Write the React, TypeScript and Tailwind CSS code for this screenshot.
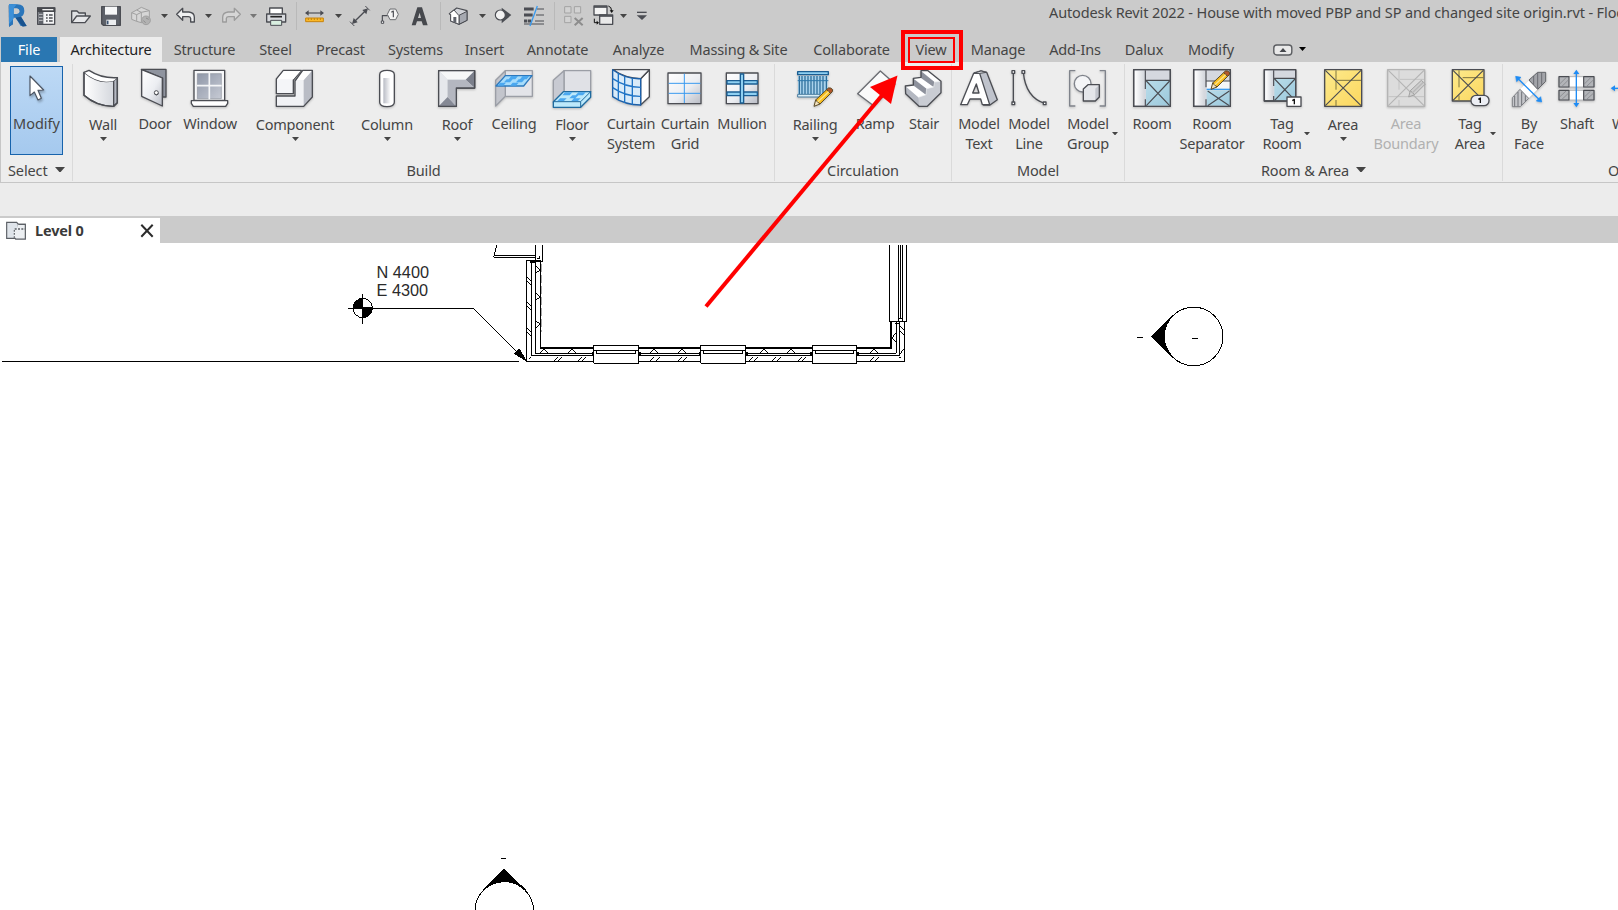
import type { ReactNode } from "react";

const INK = "#4b4d53";

/* ---------- shared gradients ---------- */
function Defs() {
  return (
    <svg className="absolute h-0 w-0" aria-hidden="true">
      <defs>
        <linearGradient id="steel" x1="0" y1="0" x2="1" y2="1">
          <stop offset="0" stopColor="#ffffff" />
          <stop offset="0.55" stopColor="#eceef2" />
          <stop offset="1" stopColor="#b9bcc5" />
        </linearGradient>
        <linearGradient id="steelH" x1="0" y1="0" x2="1" y2="0">
          <stop offset="0" stopColor="#b9bcc5" />
          <stop offset="1" stopColor="#ffffff" />
        </linearGradient>
        <linearGradient id="wallG" x1="0" y1="0" x2="1" y2="0">
          <stop offset="0" stopColor="#ffffff" />
          <stop offset="1" stopColor="#d4d7dd" />
        </linearGradient>
        <linearGradient id="glass" x1="0" y1="0" x2="1" y2="1">
          <stop offset="0" stopColor="#8f97a8" />
          <stop offset="1" stopColor="#c6cad4" />
        </linearGradient>
        <linearGradient id="aqua" x1="0" y1="0" x2="1" y2="1">
          <stop offset="0" stopColor="#b9dcea" />
          <stop offset="1" stopColor="#9cc9dc" />
        </linearGradient>
        <linearGradient id="gold" x1="0" y1="0" x2="1" y2="1">
          <stop offset="0" stopColor="#fdea8c" />
          <stop offset="1" stopColor="#fbd75f" />
        </linearGradient>
      </defs>
    </svg>
  );
}

/* Ribbon icons: 40px box, three drawing units to a pixel */
function Big({ x, children }: { x: number; children: ReactNode }) {
  return (
    <svg className="h-10 w-10 shrink-0 overflow-visible drop-shadow-[0_1px_1px_rgba(0,0,0,0.22)]" viewBox={`${x} 204 120 120`} fill="none" stroke={INK} strokeWidth={4} strokeLinejoin="round">
      {children}
    </svg>
  );
}

/* Quick access icons: 20px box, three drawing units to a pixel */
function Small({ x, className = "", children }: { x: number; className?: string; children: ReactNode }) {
  return (
    <svg className={`h-5 w-5 shrink-0 overflow-visible ${className}`} viewBox={`${x} 18 60 60`} fill="none" stroke={INK} strokeWidth={4} strokeLinejoin="round">
      {children}
    </svg>
  );
}

function Caret({ className = "", size = "w-[7px]" }: { className?: string; size?: string }) {
  return (
    <svg className={`${size} shrink-0 ${className}`} viewBox="0 0 8 4.6" fill="currentColor">
      <path d="M0 0h8L4 4.6z" />
    </svg>
  );
}

function Pencil({ x, y, gray = false }: { x: number; y: number; gray?: boolean }) {
  return (
    <g transform={`translate(${x} ${y})`} strokeWidth={3} stroke={gray ? "#a2a2a2" : "#5a4a26"}>
      <path d="M-2 1 L3 -18 L16 -6 Z" fill={gray ? "#cfcfcf" : "#f3e3c0"} />
      <path d="M3 -18 L36 -49 L48 -38 L16 -6 Z" fill={gray ? "#cdcdcd" : "#f7bd1f"} />
      {!gray && <path d="M36 -49 L41 -54 Q49 -56 54 -49 L53 -43 L48 -38 Z" fill="#b4572b" />}
      <path d="M9 -12 L42 -43" stroke={gray ? "#b8b8b8" : "#fde48b"} strokeWidth={4} />
    </g>
  );
}

/* ---------- ribbon icons ---------- */
const icons: Record<string, ReactNode> = {
  cursor: (
    <svg className="h-10 w-10 shrink-0 overflow-visible drop-shadow-[1px_2px_1px_rgba(0,0,0,0.25)]" viewBox="51 204 120 120" fill="none">
      <path d="M90 228 V287 L103 276 L114 300 L124 295 L114 271 L131 270 Z" fill="#fff" stroke="#4b5462" strokeWidth={3.5} strokeLinejoin="round" />
    </svg>
  ),
  wall: (
    <Big x={254}>
      <path d="M257 217 Q300 254 346 242 V319 Q296 320 257 286 Z" fill="url(#wallG)" />
      <path d="M346 242 L357 233 V308 L346 319 Z" fill="#b4b8c2" />
      <path d="M257 217 L272 211 Q310 236 357 233 L346 242 Q300 254 257 217 Z" fill="#fff" stroke="none" />
      <path d="M346 319 Q296 320 257 286 V217 L272 211 Q310 236 357 233 V308 Z" />
    </Big>
  ),
  door: (
    <Big x={405}>
      <path d="M424 208 H498 V291 H488 V234 Z" fill="#8f949f" />
      <path d="M425 209 L487 234 V318 L425 289 Z" fill="url(#steel)" />
      <circle cx="469" cy="278" r="6" fill="#fff" strokeWidth={3} />
      <path d="M464 283 Q470 288 476 281" strokeWidth={3} />
    </Big>
  ),
  window: (
    <Big x={573}>
      <path d="M585 211 H677 V301 H585 Z" fill="#f7f8fa" />
      <path d="M595 221 H667 V296 H595 Z" fill="url(#glass)" strokeWidth={2} stroke="#8c919c" />
      <path d="M631 219 V298 M594 257 H668" stroke="#f4f5f7" strokeWidth={5} />
      <path d="M577 302 H686 V310 L680 319 H583 L577 310 Z" fill="#fff" />
    </Big>
  ),
  component: (
    <Big x={825}>
      <path d="M829 288 H885 V243 L908 211 H937 V291 L911 319 H829 Z" fill="#f1f2f5" stroke="none" />
      <path d="M911 240 L937 211 V291 L911 319 Z" fill="#b9bcc5" stroke="none" />
      <path d="M885 240 L908 211 H937 L911 240 Z" fill="#fff" stroke="none" />
      <path d="M829 237 L850 211 H904 L880 240 V281 H829 Z" fill="#f4f5f8" />
      <path d="M832 238 L852 213 H902 L880 238 Z" fill="#fff" stroke="none" />
      <path d="M829 288 H885 V243 L908 211 H937 V291 L911 319 H829 Z" />
    </Big>
  ),
  column: (
    <Big x={141}>
      <path d="M179 224 Q179 211 201 211 Q223 211 223 224 V307 Q223 320 201 320 Q179 320 179 307 Z" fill="#fff" />
      <path d="M190 234 H212 V310 H190 Z" fill="url(#steelH)" stroke="none" />
    </Big>
  ),
  roof: (
    <Big x={351}>
      <path d="M356 212 H464 V264 H409 V319 H356 Z" fill="#d4d7dd" />
      <path d="M358 214 H462 L437 239 H383 Z" fill="#f6f7f8" stroke="none" />
      <path d="M356 212 L383 239 V291 L356 319 Z" fill="#e6e8ec" stroke="none" />
      <path d="M437 239 L464 212 V264 Z" fill="#7b7f8b" stroke="none" />
      <path d="M356 319 L383 291 L409 319 Z" fill="#858995" stroke="none" />
      <path d="M383 239 H437 L464 264 H409 V319 L383 291 Z" fill="#b4b7c0" stroke="none" />
      <path d="M356 212 H464 V264 H409 V319 H356 Z" />
    </Big>
  ),
  ceiling: (
    <Big x={522}>
      <path d="M556 212 H637 V289 H556 Z" fill="#e3e4e9" stroke="#9b9ea6" />
      <path d="M527 241 L556 212 V289 L527 318 Z" fill="#c3c5cc" stroke="#9b9ea6" />
      <path d="M556 227 H636 L611 258 H528 Z" fill="#a7dcfb" stroke="#2d79bd" />
      <path d="M574 228 h20 l-8 10 h-20z M608 228 h20 l-8 10 h-20z M560 238 h18 l-8 9 h-18z M596 238 h18 l-8 9 h-18z M540 248 h18 l-8 9 h-18z M578 248 h18 l-8 9 h-18z" fill="#4ba8f0" stroke="none" />
    </Big>
  ),
  floor: (
    <Big x={696}>
      <path d="M732 212 H812 V275 H732 Z" fill="#e0e1e6" stroke="#9b9ea6" />
      <path d="M700 241 L732 212 V275 L700 308 Z" fill="#c8cad2" stroke="#9b9ea6" />
      <path d="M730 275 H812 V292 L782 322 H700 V305 Z" fill="#bde9fb" stroke="#1f6a9e" />
      <path d="M735 277 h22 l-8 9 h-22z M775 277 h22 l-8 9 h-22z M757 286 h18 l-9 9 h-18z M720 295 h20 l-8 8 h-20z M762 295 h20 l-8 8 h-20z" fill="#4ba8f0" stroke="none" />
      <path d="M700 305 H782 L812 275 M782 305 V322" stroke="#1f6a9e" strokeWidth={3} />
    </Big>
  ),
  curtainSystem: (
    <Big x={876}>
      <path d="M965 236 L991 209 V290 L965 315 Z" fill="#fff" />
      <path d="M881 209 H991 L965 236 Q920 236 881 209 Z" fill="#f2f3f5" />
      <path d="M881 209 Q920 238 965 236 V315 Q918 315 881 290 Z" fill="#d9ebf9" stroke="#1c5fa8" />
      <path d="M898 220 V301 M917 230 V309 M940 235 V314 M881 236 Q920 262 965 262 M881 263 Q920 290 965 289" stroke="#1f74c6" />
    </Big>
  ),
  curtainGrid: (
    <Big x={78}>
      <path d="M87 219 H186 V311 H87 Z" fill="url(#steel)" />
      <path d="M136 221 V309 M89 250 H184 M89 280 H184" stroke="#3a9bf0" strokeWidth={3} />
    </Big>
  ),
  mullion: (
    <Big x={246}>
      <path d="M259 219 H354 V311 H259 Z" fill="url(#steel)" />
      <path d="M261 242 H352 V252 H261 Z M261 276 H352 V287 H261 Z" fill="#8fd0f2" stroke="#1b5e93" />
      <path d="M301 222 H311 V309 H301 Z" fill="#8fd0f2" stroke="#1b5e93" />
    </Big>
  ),
  railing: (
    <Big x={465}>
      <path d="M474 228 H563 V284 H474 Z" fill="#a9d2ec" stroke="none" />
      <path d="M478 228 V282 M486 228 V282 M495 228 V282 M504 228 V282 M513 228 V282 M522 228 V282 M531 228 V282 M540 228 V282 M549 228 V282 M559 228 V282" stroke="#1f618f" strokeWidth={3.4} />
      <path d="M473 215 H565 V224 H473 Z" fill="#8fd0f2" stroke="#1b5e93" />
      <path d="M473 242 H565" stroke="#2f78ab" strokeWidth={3} />
      <path d="M473 283 H540 V291 H473 Z" fill="#d9eef8" stroke="#4b7d9f" strokeWidth={3} />
      <Pencil x={524} y={318} />
    </Big>
  ),
  ramp: (
    <Big x={648}>
      <path d="M656 281 L724 213 L768 252 L705 318 Z" fill="#fafafa" stroke="#6a6c72" />
    </Big>
  ),
  stair: (
    <Big x={792}>
      <path d="M796 258 L820 254 V234 L843 231 V212 L862 211 L903 244 V278 L862 319 H837 L797 281 Z" fill="#c9ccd3" stroke="none" />
      <path d="M797 259 L835 292 L837 319 L797 281 Z" fill="#b4b8c1" stroke="none" />
      <path d="M796 258 L818 255 L858 284 L835 292 Z" fill="#fff" stroke="none" />
      <path d="M820 236 L860 266 L858 284 L820 256 Z" fill="#8d919c" stroke="none" />
      <path d="M820 235 L843 232 L881 261 L860 266 Z" fill="#fff" stroke="none" />
      <path d="M843 214 L884 246 L881 261 L843 234 Z" fill="#8d919c" stroke="none" />
      <path d="M843 212 L862 211 L903 244 L884 246 Z" fill="#fff" stroke="none" />
      <path d="M835 292 L858 284 L860 266 L881 261 L884 246 L903 244" strokeWidth={2} stroke="#f2f3f5" />
      <path d="M796 258 L820 255 V235 L843 232 V212 L862 211 L903 244 V278 L862 319 H837 L797 281 Z" />
    </Big>
  ),
  modelText: (
    <Big x={0}>
      <path d="M46 219 L66 213 L83 217 L115 299 L93 315 H74 L57 226 Z" fill="#bfc3cc" />
      <path fillRule="evenodd" d="M5 314 L44 220 H62 L92 314 H70 L65 297 H33 L25 314 Z M41 279 H60 L52 252 Z" fill="#fff" />
      <path d="M44 220 L66 213 L83 217 L62 220 Z" fill="#eceef1" strokeWidth={3} />
    </Big>
  ),
  modelLine: (
    <Big x={150}>
      <path d="M163 217 V310 M193 217 Q200 292 257 310" />
      <path d="M159 212 h8 v8 h-8z M159 306 h8 v8 h-8z M189 212 h8 v8 h-8z M253 306 h8 v8 h-8z" fill="#fff" />
    </Big>
  ),
  modelGroup: (
    <Big x={324}>
      <path d="M346 212 H329 V318 H346 M419 212 H436 V318 H419" stroke="#7f838b" />
      <circle cx="368" cy="251" r="25" fill="#f4f5f7" stroke="#7f838b" />
      <path d="M370 265 L382 254 H418 V291 L406 303 H370 Z" fill="#e4e6ea" stroke="none" />
      <path d="M406 266 L418 254 V291 L406 303 Z" fill="#c3c6ce" stroke="none" />
      <path d="M370 267 L384 254 H418 V291 L406 303 H370 Z" />
    </Big>
  ),
  room: (
    <Big x={516}>
      <path d="M521 209 H631 V319 H521 Z" fill="#d5d8df" />
      <path d="M524 212 H553 V316 H524 Z" fill="url(#wallG)" stroke="none" />
      <path d="M558 242 H630 V317 H558 Z" fill="url(#aqua)" stroke="none" />
      <path d="M556 211 V267 M556 298 V318 M556 241 H630 M559 243 L629 317 M629 243 L559 317" strokeWidth={3.5} />
      <path d="M521 209 H631 V319 H521 Z" />
    </Big>
  ),
  roomSeparator: (
    <Big x={696}>
      <path d="M701 209 H811 V319 H701 Z" fill="#d5d8df" />
      <path d="M704 212 H733 V316 H704 Z" fill="url(#wallG)" stroke="none" />
      <path d="M740 271 H810 V317 H740 Z" fill="url(#aqua)" stroke="none" />
      <path d="M740 244 H810 V267 H740 Z" fill="#f4f6f8" stroke="none" />
      <path d="M738 211 V262 M738 298 V318 M738 243 H810 M743 273 L808 317 M808 273 L743 317" strokeWidth={3.5} />
      <path d="M740 268 H810" stroke="#3a9bf0" />
      <path d="M701 209 H811 V319 H701 Z" />
      <Pencil x={755} y={267} />
    </Big>
  ),
  tagRoom: (
    <Big x={904}>
      <path d="M911 209 H1005 V303 H911 Z" fill="#d5d8df" />
      <path d="M914 212 H936 V300 H914 Z" fill="url(#wallG)" stroke="none" />
      <path d="M941 237 H1004 V301 H941 Z" fill="url(#aqua)" stroke="none" />
      <path d="M939 211 V258 M939 288 V302 M939 235 H1004 M942 237 L1003 301 M1003 237 L942 301" strokeWidth={3.5} />
      <path d="M911 209 H1005 V303 H911 Z" />
      <path d="M979 291 H1021 V319 H979 Z" fill="#fff" />
      <path d="M995 302 L1001 298 V313" stroke="#111" />
    </Big>
  ),
  area: (
    <Big x={138}>
      <path d="M143 209 H254 V319 H143 Z" fill="url(#gold)" />
      <path d="M177 211 V269 M177 300 V318 M180 241 H252" stroke="#7d7440" strokeWidth={3} />
      <path d="M145 211 L252 317 M252 211 L145 317" strokeWidth={3.5} />
    </Big>
  ),
  areaBoundary: (
    <Big x={327}>
      <g stroke="#b4b4b4">
        <path d="M332 209 H443 V319 H332 Z" fill="#dcdcdc" />
        <path d="M366 211 V269 M366 300 V318 M369 238 H441 M334 290 H441" stroke="#c2c2c2" strokeWidth={3} />
        <path d="M334 211 L441 317 M441 211 L334 317" strokeWidth={3.5} />
      </g>
      <Pencil x={397} y={290} gray />
    </Big>
  ),
  tagArea: (
    <Big x={514}>
      <path d="M521 209 H616 V303 H521 Z" fill="url(#gold)" />
      <path d="M541 211 V262 M541 286 V302 M552 233 H615" stroke="#7d7440" strokeWidth={3} />
      <path d="M523 211 L614 301 M614 211 L523 301" strokeWidth={3.5} />
      <rect x="577" y="286" width="54" height="31" rx="15" fill="#eceef4" />
      <path d="M599 298 L605 294 V309" stroke="#111" />
    </Big>
  ),
  byFace: (
    <Big x={694}>
      <path d="M727 268 L753 242 L780 268 L753 295 Z" fill="#fff" stroke="none" />
      <path d="M754 240 L780 217 H804 V244 L780 268 Z" fill="#a2a4a9" stroke="#63656a" strokeWidth={3} />
      <path d="M704 293 L727 268 L753 295 L728 320 H704 Z" fill="#c5c6ca" stroke="#808287" strokeWidth={3} />
      <path d="M768 228 V254 M780 218 V266 M792 218 V254 M711 288 V319 M721 276 V319 M732 275 V315 M743 286 V304" stroke="#5f6167" strokeWidth={2.5} />
      <path d="M720 235 L786 300" stroke="#1e8cf5" />
      <path d="M714 229 L730 232 L717 245 Z M792 306 L776 303 L789 290 Z" fill="#1e8cf5" stroke="#1e8cf5" strokeWidth={2} />
    </Big>
  ),
  shaft: (
    <Big x={837}>
      <path d="M843 230 H948 V261 H843 Z M843 271 H948 V300 H843 Z" fill="#fff" stroke="#b7b8bb" strokeWidth={3} />
      <path d="M843 230 H873 V261 H843 Z M917 230 H948 V261 H917 Z M843 271 H873 V300 H843 Z M917 271 H948 V300 H917 Z" fill="#b2b4b8" strokeWidth={3.5} />
      <path d="M845 252 L865 232 M852 259 L871 240 M919 252 L939 232 M926 259 L946 240 M845 291 L864 273 M852 298 L871 280 M919 291 L938 273 M926 298 L946 280" stroke="#85878c" strokeWidth={2.5} />
      <path d="M895 218 V313" stroke="#1e8cf5" />
      <path d="M895 209 L904 222 H886 Z M895 322 L904 309 H886 Z" fill="#1e8cf5" stroke="none" />
    </Big>
  ),
  wallOpening: (
    <Big x={984}>
      <path d="M1004 265 H1080" stroke="#1e8cf5" />
      <path d="M998 265 L1011 256 V274 Z" fill="#1e8cf5" stroke="none" />
    </Big>
  ),
};

/* ---------- ribbon ---------- */
type Btn = { icon: string; lines: string[]; box: string; drop?: "below" | "side"; off?: boolean };

function RibbonButton({ icon, lines, box, drop, off }: Btn) {
  return (
    <button className={`relative flex shrink-0 flex-col items-center pt-1.5 ${box} ${off ? "text-[#b1b1b1]" : "text-[#454545]"}`}>
      {icons[icon]}
      <span className={`flex flex-col items-center text-[14.5px] leading-5 tracking-[-0.22px] whitespace-nowrap ${drop === "below" ? "mt-1.5" : "mt-[5px]"}`}>
        {lines.map((l) => (
          <span key={l}>{l}</span>
        ))}
      </span>
      {drop === "below" && <Caret size="w-[7px]" className="mt-[3px]" />}
      {drop === "side" && <Caret size="w-[6px]" className="absolute top-[70px] -right-[5px]" />}
    </button>
  );
}

function Panel({ title, width, buttons, menu }: { title: string; width: string; buttons: Btn[]; menu?: boolean }) {
  return (
    <section className={`flex h-[120px] shrink-0 flex-col ${width}`}>
      <div className="flex h-24 items-start">
        {buttons.map((b) => (
          <RibbonButton key={b.icon} {...b} />
        ))}
      </div>
      <div className="flex h-[23px] items-center justify-center gap-[7px] text-[14.5px] leading-[22px] tracking-[-0.12px] text-[#454545]">
        {title}
        {menu && <Caret size="w-[10px]" />}
      </div>
    </section>
  );
}

const Divider = () => <div className="mt-0.5 h-[117px] w-px shrink-0 bg-[#dadada]" />;

const build: Btn[] = [
  { icon: "wall", lines: ["Wall"], box: "ml-[7px] w-[46px]", drop: "below" },
  { icon: "door", lines: ["Door"], box: "ml-1 w-[50px]" },
  { icon: "window", lines: ["Window"], box: "w-[60px]" },
  { icon: "component", lines: ["Component"], box: "ml-3 w-[86px]", drop: "below" },
  { icon: "column", lines: ["Column"], box: "ml-[19px] w-[60px]", drop: "below" },
  { icon: "roof", lines: ["Roof"], box: "ml-5 w-10", drop: "below" },
  { icon: "ceiling", lines: ["Ceiling"], box: "ml-3 w-[50px]" },
  { icon: "floor", lines: ["Floor"], box: "ml-3 w-[42px]", drop: "below" },
  { icon: "curtainSystem", lines: ["Curtain", "System"], box: "ml-[13px] w-[50px]" },
  { icon: "curtainGrid", lines: ["Curtain", "Grid"], box: "ml-1 w-[50px]" },
  { icon: "mullion", lines: ["Mullion"], box: "ml-[5px] w-[54px]" },
];
const circulation: Btn[] = [
  { icon: "railing", lines: ["Railing"], box: "ml-[15px] w-[50px]", drop: "below" },
  { icon: "ramp", lines: ["Ramp"], box: "ml-[13px] w-11" },
  { icon: "stair", lines: ["Stair"], box: "ml-[7px] w-10" },
];
const model: Btn[] = [
  { icon: "modelText", lines: ["Model", "Text"], box: "ml-[3px] w-12" },
  { icon: "modelLine", lines: ["Model", "Line"], box: "ml-[3px] w-[46px]" },
  { icon: "modelGroup", lines: ["Model", "Group"], box: "ml-[11px] w-[50px]", drop: "side" },
];
const roomArea: Btn[] = [
  { icon: "room", lines: ["Room"], box: "ml-[5px] w-11" },
  { icon: "roomSeparator", lines: ["Room", "Separator"], box: "ml-[3px] w-[70px]" },
  { icon: "tagRoom", lines: ["Tag", "Room"], box: "ml-3 w-[46px]", drop: "side" },
  { icon: "area", lines: ["Area"], box: "ml-[18px] w-10", drop: "below" },
  { icon: "areaBoundary", lines: ["Area", "Boundary"], box: "ml-[9px] w-[68px]", off: true },
  { icon: "tagArea", lines: ["Tag", "Area"], box: "ml-[9px] w-[42px]", drop: "side" },
];
const opening: Btn[] = [
  { icon: "byFace", lines: ["By", "Face"], box: "ml-1.5 w-10" },
  { icon: "shaft", lines: ["Shaft"], box: "ml-2 w-10" },
  { icon: "wallOpening", lines: ["Wall"], box: "ml-3 w-[34px]" },
];

function Ribbon() {
  return (
    <div className="flex h-[121px] overflow-hidden border-b border-l border-[#c6c6c6] bg-[#ededed]">
      <section className="flex h-[120px] w-[71px] shrink-0 flex-col">
        <button className="mt-1 ml-[9px] flex h-[89px] w-[53px] flex-col items-center border border-[#1763ac] bg-gradient-to-b from-[#bdd9f5] to-[#a5c9ee] pt-px text-[#454545]">
          {icons.cursor}
          <span className="mt-[5px] text-[14.5px] leading-5">Modify</span>
        </button>
        <div className="mt-[3px] flex h-[23px] items-center gap-[7px] pl-[7px] text-[14.5px] leading-[22px] tracking-[-0.12px] text-[#454545]">
          Select
          <Caret size="w-[10px]" />
        </div>
      </section>
      <Divider />
      <Panel title="Build" width="w-[701px]" buttons={build} />
      <Divider />
      <Panel title="Circulation" width="w-[176px]" buttons={circulation} />
      <Divider />
      <Panel title="Model" width="w-[172px]" buttons={model} />
      <Divider />
      <Panel title="Room & Area" width="w-[377px]" buttons={roomArea} menu />
      <Divider />
      <Panel title="Opening" width="w-[268px]" buttons={opening} />
    </div>
  );
}

/* ---------- title bar with quick access tools ---------- */
const Rule = ({ className }: { className: string }) => <div className={`h-7 w-px shrink-0 bg-[#b9b9b9] ${className}`} />;

function TitleBar() {
  return (
    <header className="flex h-[37px] items-start overflow-hidden bg-[#cbcbcb] text-[#454545]">
      <div className="flex h-8 shrink-0 items-center">
        <Small x={21} className="ml-[7px]">
          <path d="M26 16 L38 13 V73 L27 80 Z" fill="#174d86" stroke="none" />
          <path fillRule="evenodd" d="M27 13 H52 Q74 14 73 33 Q72 47 63 50 L80 78 H62 L47 53 H39 V73 L27 80 Z M41 25 V42 H51 Q59 41 59 34 Q58 26 51 25 Z" fill="#2b76bb" stroke="none" />
          <path d="M46 53 L63 50 L80 78 L68 80 Z" fill="#19538f" stroke="none" />
          <path d="M27 13 H50 L41 25 V56 L27 72 Z" fill="#3d90d8" stroke="none" />
        </Small>
        <Small x={108} className="ml-[9px]">
          <path d="M113 24 H164 V73 H113 Z" fill="#f4f5f6" />
          <path d="M111 22 H166 V36 H111 Z" fill="#46484d" stroke="none" />
          <path d="M127 29 H160" stroke="#f0f0f0" strokeWidth={4} />
          <path d="M115 36 H130 V72 H115 Z" fill="#5f636a" stroke="none" />
          <path d="M117 43 H128 M117 52 H128 M117 61 H128" strokeWidth={3} stroke="#c4c6ca" />
          <path d="M138 45 H143 M147 45 H158 M138 54 H143 M147 54 H158 M138 63 H143 M147 63 H158" strokeWidth={4} />
        </Small>
        <Small x={213} className="ml-[15px]">
          <path d="M215 68 V33 H231 L237 39 H256 V48" fill="#dfe1e4" />
          <path d="M215 68 L230 48 H271 L255 68 Z" fill="#e6e7e9" />
        </Small>
        <Small x={303} className="ml-2.5">
          <path d="M305 20 H361 V76 H310 L305 71 Z" fill="#5d6169" />
          <path d="M315 20 H351 V44 H315 Z" fill="#f6f7f8" stroke="none" />
          <path d="M319 59 H348 V75 H319 Z" fill="#eceef0" stroke="none" />
          <path d="M323 62 V73" stroke="#3a5270" strokeWidth={5} />
        </Small>
        <Small x={393} className="ml-2.5">
          <g stroke="#a0a0a0" strokeWidth={3}>
            <path d="M395 38 L410 30 L424 22 L448 32 V58 L424 68 L410 64 L395 58 Z" fill="#d6d6d6" />
            <path d="M395 38 L410 44 V64 M410 30 L424 37 L448 32 M424 37 V68 M410 44 L424 37" />
            <circle cx="438" cy="61" r="13" fill="#b2b2b2" />
            <path d="M430 62 L437 68 M446 58 L438 54" stroke="#8f8f8f" />
          </g>
        </Small>
        <Caret size="w-[7px]" className="ml-[10px]" />
        <Small x={528} className="ml-[8px]">
          <path d="M530 43 L548 25 V36 H567 Q583 38 583 52 V66 H572 V55 Q571 50 565 50 H548 V61 Z" fill="#eff0f1" />
        </Small>
        <Caret size="w-[7px]" className="ml-[9px]" />
        <Small x={666} className="ml-[10px]">
          <path d="M721 43 L703 25 V36 H684 Q668 38 668 52 V66 H679 V55 Q680 50 686 50 H703 V61 Z" fill="#d6d6d6" stroke="#9c9c9c" />
        </Small>
        <Caret size="w-[7px]" className="ml-[8px] text-[#777]" />
        <Small x={798} className="ml-[9px]">
          <path d="M809 24 H847 V44 H809 Z" fill="#fff" />
          <path d="M800 42 H857 V66 H800 Z" fill="#d8dade" />
          <path d="M811 50 H846" stroke="#222" strokeWidth={5} />
          <path d="M812 61 H845 V76 H812 Z" fill="#d9efe0" strokeWidth={3} />
        </Small>
        <Rule className="ml-2.5" />
        <Small x={912} className="ml-[7px]">
          <path d="M920 39 H967" strokeWidth={3.5} />
          <path d="M915 39 L926 31 V47 Z M972 39 L961 31 V47 Z" fill={INK} stroke="none" />
          <path d="M917 54 H970 V65 H917 Z" fill="#fbb827" stroke="#c8830b" strokeWidth={3} />
          <path d="M925 55 V60 M934 55 V60 M943 55 V60 M952 55 V60 M961 55 V60" stroke="#9d6508" strokeWidth={2} />
        </Small>
        <Caret size="w-[7px]" className="ml-[11px]" />
        <Small x={90} className="ml-[8px]">
          <path d="M102 66 L138 31" strokeWidth={4} />
          <path d="M96 72 L101 54 L113 67 Z M144 25 L139 43 L127 30 Z" fill={INK} stroke="none" />
          <path d="M90 65 L103 78 M136 18 L149 31" strokeWidth={3} />
        </Small>
        <Small x={180} className="ml-2.5">
          <path d="M187 66 V47 H203" strokeWidth={3.5} />
          <path d="M184 63 h7 v7 h-7z" fill="#fff" strokeWidth={3} />
          <path d="M202 43 L210 27 H227 L235 43 L227 59 H210 Z" fill="#f3f3f3" stroke="#6a6c70" strokeWidth={3} />
          <path d="M214 37 L220 33 V52" strokeWidth={3.5} />
        </Small>
        <Small x={270} className="ml-2.5">
          <path fillRule="evenodd" d="M275 76 L292 22 H306 L323 76 H309 L305 64 H291 L287 76 Z M294 54 H303 L299 38 Z" fill="#46484d" stroke="none" />
        </Small>
        <Rule className="ml-2.5" />
        <Small x={384} className="ml-[7px]">
          <path d="M388 41 L410 24 L441 32 V61 L417 73 L392 63 V44 Z" fill="#d3d5da" strokeWidth={3.5} />
          <path d="M417 46 L441 34 V61 L417 73 Z" fill="#a6a9b1" strokeWidth={3} />
          <path d="M388 41 L402 30 L417 47 V73 L392 63 V43 Z" fill="#fff" strokeWidth={3} />
          <path d="M400 51 H409 V69 L400 66 Z" fill="#60636b" stroke="none" />
        </Small>
        <Caret size="w-[7px]" className="ml-[11px]" />
        <Small x={519} className="ml-[7px]">
          <path d="M545 23 L574 45 L545 70 Z" fill={INK} stroke="none" />
          <circle cx="541" cy="45" r="15" fill="#f1f1f1" strokeWidth={3.5} />
        </Small>
        <Small x={612} className="ml-[11px]">
          <path d="M612 27 H641 M612 45 H638" strokeWidth={9} />
          <path d="M612 63 H634" strokeWidth={9} strokeDasharray="10 2" />
          <path d="M651 27 H672 M648 45 H672 M645 63 H672" strokeWidth={3} />
          <path d="M612 72 H672" strokeWidth={3} />
          <path d="M630 78 L652 18" stroke="#3a9bf0" />
        </Small>
        <Rule className="ml-2.5" />
        <Small x={729} className="ml-2">
          <g stroke="#a3a3a3" strokeWidth={3}>
            <path d="M734 20 H753 V39 H734 Z M763 20 H782 V39 H763 Z M734 49 H753 V68 H734 Z" fill="#d2d2d2" />
            <path d="M764 54 L788 76 M788 54 L764 76" stroke="#8d8d8d" strokeWidth={6} />
          </g>
        </Small>
        <Small x={819} className="ml-2.5">
          <path d="M822 18 H861 V45 H822 Z" fill="#f4f4f4" />
          <path d="M822 21 H861" strokeWidth={5} />
          <path d="M839 45 H878 V73 H839 Z" fill="#e9e9e9" />
          <path d="M839 48 H878" strokeWidth={5} />
          <path d="M865 18 Q875 20 875 34 M823 56 V68 H832" stroke="#111" strokeWidth={3} />
          <path d="M869 31 H881 L875 39 Z M830 62 V74 L837 68 Z" fill="#111" stroke="none" />
        </Small>
        <Caret size="w-[7px]" className="ml-[7px]" />
        <Small x={936} className="ml-[5px]">
          <path d="M951 37 H980" strokeWidth={4} />
          <path d="M950 46 H981 L966 60 Z" fill={INK} stroke="none" />
        </Small>
      </div>
      <div className="ml-[397px] h-[25px] text-[14.5px] leading-[25px] tracking-[-0.12px] whitespace-nowrap">
        Autodesk Revit 2022 - House with moved PBP and SP and changed site origin.rvt - Floor Plan: Level 0
      </div>
    </header>
  );
}

/* ---------- ribbon tabs ---------- */
const tabs: [string, string][] = [
  ["Structure", "w-[85px]"],
  ["Steel", "w-[57px]"],
  ["Precast", "w-[73px]"],
  ["Systems", "w-[77px]"],
  ["Insert", "w-[61px]"],
  ["Annotate", "w-[85px]"],
  ["Analyze", "w-[77px]"],
  ["Massing & Site", "w-[123px]"],
  ["Collaborate", "w-[103px]"],
  ["View", "w-[56px]"],
  ["Manage", "w-[78px]"],
  ["Add-Ins", "w-[76px]"],
  ["Dalux", "w-[62px]"],
  ["Modify", "w-[72px]"],
];

function Tabs() {
  return (
    <nav className="flex h-[25px] bg-[#cbcbcb] text-[14.5px] leading-[25px] tracking-[-0.16px] whitespace-nowrap text-[#454545]">
      <span className="ml-px flex w-14 shrink-0 justify-center bg-[#2a77b2] text-white">File</span>
      <span className="ml-[3px] flex w-[102px] shrink-0 justify-center bg-[#ededed] text-[#222]">Architecture</span>
      {tabs.map(([name, w]) => (
        <span key={name} className={`relative flex shrink-0 justify-center ${w}`}>
          {name}
          {name === "View" && (
            <>
              <span className="absolute -top-[7px] -left-[2px] h-10 w-[62px] border-4 border-[#f00]" />
              <span className="absolute top-0 left-[5px] h-[26px] w-[47px] border-2 border-[#f00]" />
            </>
          )}
        </span>
      ))}
      <span className="ml-[26px] flex items-center gap-[6px]">
        <svg className="h-3 w-5" viewBox="0 0 20 12">
          <rect x="0.8" y="1" width="18" height="10" rx="3" fill="#e9e9e9" stroke="#5b5d61" strokeWidth="1.4" />
          <path d="M6.5 8 L10 4 L13.5 8 Z" fill="#46484d" />
        </svg>
        <Caret size="w-[7px]" className="text-black" />
      </span>
    </nav>
  );
}

/* ---------- document tabs ---------- */
function DocumentTabs() {
  return (
    <div className="flex h-[27px] items-end bg-[#cbcbcb]">
      <div className="flex h-[25px] w-40 items-center bg-white pl-1.5">
        <svg className="h-5 w-5 shrink-0" viewBox="18 151 60 60" fill="none" stroke="#5c6066" strokeWidth={3.5}>
          <path d="M20 155 H50 L55 161 V203 H20 Z" fill="#dfe4ea" />
          <path d="M55 161 H76 V205 H47 L42 200" fill="#eef0f3" />
          <path d="M42 176 H55 V161 H76 V205 H47 L42 200 Z" fill="#eceff2" stroke="none" />
          <path d="M55 161 H76 V205 H47 L42 200" />
          <path d="M44 175 H76" strokeDasharray="6 4" strokeWidth={5} />
          <path d="M43 178 V198" strokeDasharray="5 4" />
        </svg>
        <span className="ml-[9px] text-[14.5px] leading-[25px] font-bold tracking-[-0.15px] text-[#3a3a3a]">Level 0</span>
        <svg className="mr-1.5 ml-auto h-[14px] w-[14px]" viewBox="0 0 14 14" fill="none" stroke="#2c2c2c" strokeWidth="2">
          <path d="M1.3 0.8 L12.7 12.8 M12.7 0.8 L1.3 12.8" />
        </svg>
      </div>
    </div>
  );
}

/* ---------- floor plan ---------- */
function PlanWindow({ x, w }: { x: number; w: number }) {
  return (
    <g fill="#fff">
      <path d={`M${x} 331 H${x + w} V385 H${x} Z`} />
      <path d={`M${x + 9} 346 H${x + w - 9} V357 H${x + 9} Z M${x} 346 H${x + 9} M${x + w - 9} 346 H${x + w}`} />
      <path d={`M${x - 3} 352 V363 M${x + w + 3} 352 V363`} strokeWidth={6} />
    </g>
  );
}

function Drawing() {
  const peaks = [162, 246, 492, 573, 822];
  const hatch = [150, 166, 232, 247, 446, 460, 516, 531, 592, 606, 810, 824];
  return (
    <svg className="block h-[667px] w-full bg-white" viewBox="0 243 1618 667" fill="none" stroke="#000" shapeRendering="crispEdges">
      <path d="M2 361.5 H519" />
      <g transform="translate(330 235) scale(0.33333)" strokeWidth={3}>
        <circle cx="98" cy="219" r="29" fill="#fff" />
        <path d="M98 219 V190 A29 29 0 0 0 69 219 Z M98 219 V248 A29 29 0 0 0 127 219 Z" fill="#000" />
        <path d="M54 219.5 H431 L560 350 M97 178 V266" />
        <path d="M590 379 L553 355 L568 343 Z" fill="#000" />
        <path d="M500 30 L491 67 M491 62 H616 M491 68 H616 M616 30 V78 M637 30 V80 M616 80 H637 M622 72 H630 V64" />
        <path d="M589 76 H631 M589 76 V379 H793 M604 82 V363 H793 M616 76 V355 H793 M631 76 V338" />
        <path d="M631 339 H793" strokeWidth={6} />
        <path d="M600 80 H614" strokeWidth={6} />
        <path d="M635 88 V292" stroke="#aaa" strokeDasharray="24 9" />
        <path d="M589 124 L604 139 M589 136 L604 151 M589 200 L604 215 M589 212 L604 227 M589 277 L604 292 M589 288 L604 303" />
        <path d="M616 91 L630 104 L616 117 M616 172 L630 185 L616 198 M616 255 L630 268 L616 281" />
        <path d="M630 355 L642 341 L656 355 M712 355 L726 341 L740 355 M670 379 L684 365 M684 379 L698 365 M742 379 L756 365 M756 379 L770 365 M596 372 L604 365" />
      </g>
      <g transform="translate(600 235) scale(0.33333)" strokeWidth={3}>
        <path d="M116 355 H303 M116 363 H303 M116 379 H303 M438 355 H637 M438 363 H637 M438 379 H637 M771 355 H889 M771 363 H899 M771 379 H914" />
        <path d="M116 339 H303 M438 339 H637 M771 339 H873 V262" strokeWidth={5} />
        {peaks.map((p) => (
          <path key={p} d={`M${p - 14} 355 L${p} 341 L${p + 14} 355`} />
        ))}
        {hatch.map((h) => (
          <path key={h} d={`M${h} 379 L${h + 14} 365`} />
        ))}
        <PlanWindow x={-19} w={135} />
        <PlanWindow x={303} w={135} />
        <PlanWindow x={637} w={134} />
        <path d="M869 30 V260 H920 V30 M895 30 V260 M902 30 V250 M908 30 V260 M895 250 H908" />
        <path d="M889 262 V355 M899 262 V363 M914 262 V379 M884 265 H897" />
        <path d="M889 294 L876 308 L889 322 M899 272 L914 287 M899 287 L914 302 M899 357 L912 343 M897 370 L904 365" />
      </g>
      <g fill="#000" strokeWidth={1}>
        <path d="M1151.5 336.5 L1172.5 316 V357 Z" />
        <circle cx="1193.7" cy="336.5" r="29.3" fill="#fff" />
        <path d="M1137 337.5 H1142.5 M1192 338.5 H1197.5" />
        <path d="M504 869.5 L484 889.5 H525 Z" />
        <circle cx="504.3" cy="911" r="29.3" fill="#fff" />
        <path d="M500.5 858.5 H505.5" />
      </g>
      <g fill="#2a2a2a" stroke="none" className="font-['Liberation_Sans',sans-serif] text-[16.3px]">
        <text x="376.5" y="278">N 4400</text>
        <text x="376.5" y="296">E 4300</text>
      </g>
    </svg>
  );
}

export default function App() {
  return (
    <div className="relative flex h-[910px] w-[1618px] flex-col overflow-hidden bg-[#ebebeb] font-['Noto_Sans',sans-serif]">
      <Defs />
      <TitleBar />
      <Tabs />
      <Ribbon />
      <div className="h-[33px] bg-[#ececec]" />
      <DocumentTabs />
      <Drawing />
      <svg className="pointer-events-none absolute top-0 left-0 h-[320px] w-[1000px]" viewBox="0 0 1000 320">
        <path d="M706 306.5 L884 93" stroke="#f00" strokeWidth="4" />
        <path d="M897.5 75.5 L870 87 L891 104 Z" fill="#f00" />
      </svg>
    </div>
  );
}
